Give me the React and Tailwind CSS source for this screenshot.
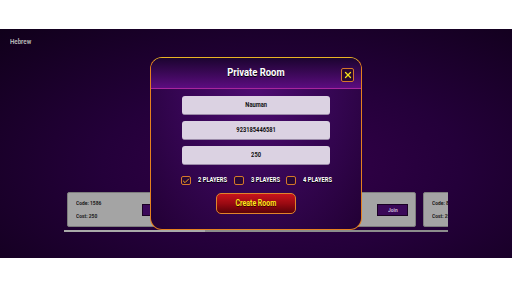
import { Check, X } from 'lucide-react';

const font = { fontFamily: 'Roboto, "Liberation Sans", sans-serif' };

// condensed look: the reference uses a narrow bold face
const Cond = ({ children, className = '' }) => (
  <span className={`inline-block whitespace-nowrap scale-x-[0.82] ${className}`}>{children}</span>
);

const RoomCard = ({ code, cost }) => (
  <div className="shrink-0 w-[349px] h-[35px] bg-[#a4a4a4] border border-[#7d7d7d] rounded-[2px] flex items-center pl-[8px] pr-[7px]">
    <div className="flex flex-col gap-[5px] text-[6px] leading-[8px] font-bold text-[#1c1c1c] w-[66px]">
      <Cond className="origin-left">Code: {code}</Cond>
      <Cond className="origin-left">Cost: {cost}</Cond>
    </div>
    <div className="w-[60px] h-[12px] bg-[#3a0858] border border-[#1a0024]" />
    <div className="flex-1" />
    <button className="w-[31px] h-[12px] bg-[#3a0858] border border-[#1a0024] text-[6px] font-bold text-[#c9b9d9] leading-none">
      <Cond>Join</Cond>
    </button>
  </div>
);

const PlayerOption = ({ label, checked }) => (
  <div className="flex items-center gap-[7px]">
    <div className="shrink-0 w-[10px] h-[9px] rounded-[2px] border border-[#d5782a] bg-[#2a0838] flex items-center justify-center">
      {checked && <Check size={8} strokeWidth={3} className="text-[#f0a020]" />}
    </div>
    <Cond className="origin-left w-[28px] text-[7px] font-bold text-white leading-none [text-shadow:0_1px_0_#000]">{label}</Cond>
  </div>
);

export default function App() {
  return (
    <div className="w-[512px] h-[288px] bg-white pt-[29px] overflow-hidden" style={font}>
      <div className="relative w-[512px] h-[229px] bg-[radial-gradient(ellipse_at_55%_60%,#34004a_0%,#24003a_45%,#10001a_100%)]">
        {/* Header label */}
        <div className="pl-[10px] pt-[8px] text-[7.5px] leading-[9px] font-bold text-[#b4b4b4]">
          <Cond className="origin-left">Hebrew</Cond>
        </div>

        {/* Room list */}
        <div className="ml-[64px] mt-[146px] w-[384px]">
          <div className="flex gap-[7px] pl-[3px] overflow-hidden">
            <RoomCard code="1586" cost="250" />
            <RoomCard code="8421" cost="250" />
          </div>
          <div className="mt-[3px] h-[2px] bg-[#8c8c8c] flex">
            <div className="w-[141px] bg-[#a9a9a9]" />
          </div>
        </div>

        {/* Private room modal */}
        <div className="absolute left-[150px] top-[28px] w-[212px] h-[173px] rounded-[12px] border-[1.5px] border-[#e5801e] border-t-[#e9b424] overflow-hidden flex flex-col bg-[radial-gradient(ellipse_at_50%_15%,#4e0c72_0%,#360654_50%,#220034_100%)]">
          <div className="relative h-[31px] shrink-0 bg-gradient-to-b from-[#1c0430] to-[#5c0c80] border-b border-[#a8269c] flex items-center justify-center">
            <Cond className="text-[11.5px] font-bold text-white [text-shadow:0_1px_0_#000]">Private Room</Cond>
            <button className="absolute right-[7px] top-[10px] w-[13px] h-[14px] rounded-[2px] bg-[#2a0630] border border-[#d5782a] flex items-center justify-center">
              <X size={10} strokeWidth={3} className="text-[#f2e21a]" />
            </button>
          </div>

          <div className="flex flex-col items-center pt-[7px]">
            {['Nauman', '923185446581', '250'].map((v, i) => (
              <div
                key={i}
                className={`w-[148px] h-[19px] rounded-[3px] bg-[#dbd2e2] border-b-[1.5px] border-[#9a8aa8] flex items-center justify-center text-[7px] font-bold text-[#111] ${i ? 'mt-[6px]' : ''}`}
              >
                <Cond>{v}</Cond>
              </div>
            ))}

            <div className="w-[150px] mt-[11px] flex justify-between">
              <PlayerOption label="2 PLAYERS" checked />
              <PlayerOption label="3 PLAYERS" />
              <PlayerOption label="4 PLAYERS" />
            </div>

            <button className="mt-[8px] w-[80px] h-[21px] rounded-[5px] border border-[#e0842a] bg-gradient-to-b from-[#c8141c] via-[#9a0a12] to-[#5a0208] text-[8.5px] font-bold text-[#ffe51a] [text-shadow:0_1px_0_#3a0000]">
              <Cond>Create Room</Cond>
            </button>
          </div>
        </div>
      </div>
    </div>
  );
}
